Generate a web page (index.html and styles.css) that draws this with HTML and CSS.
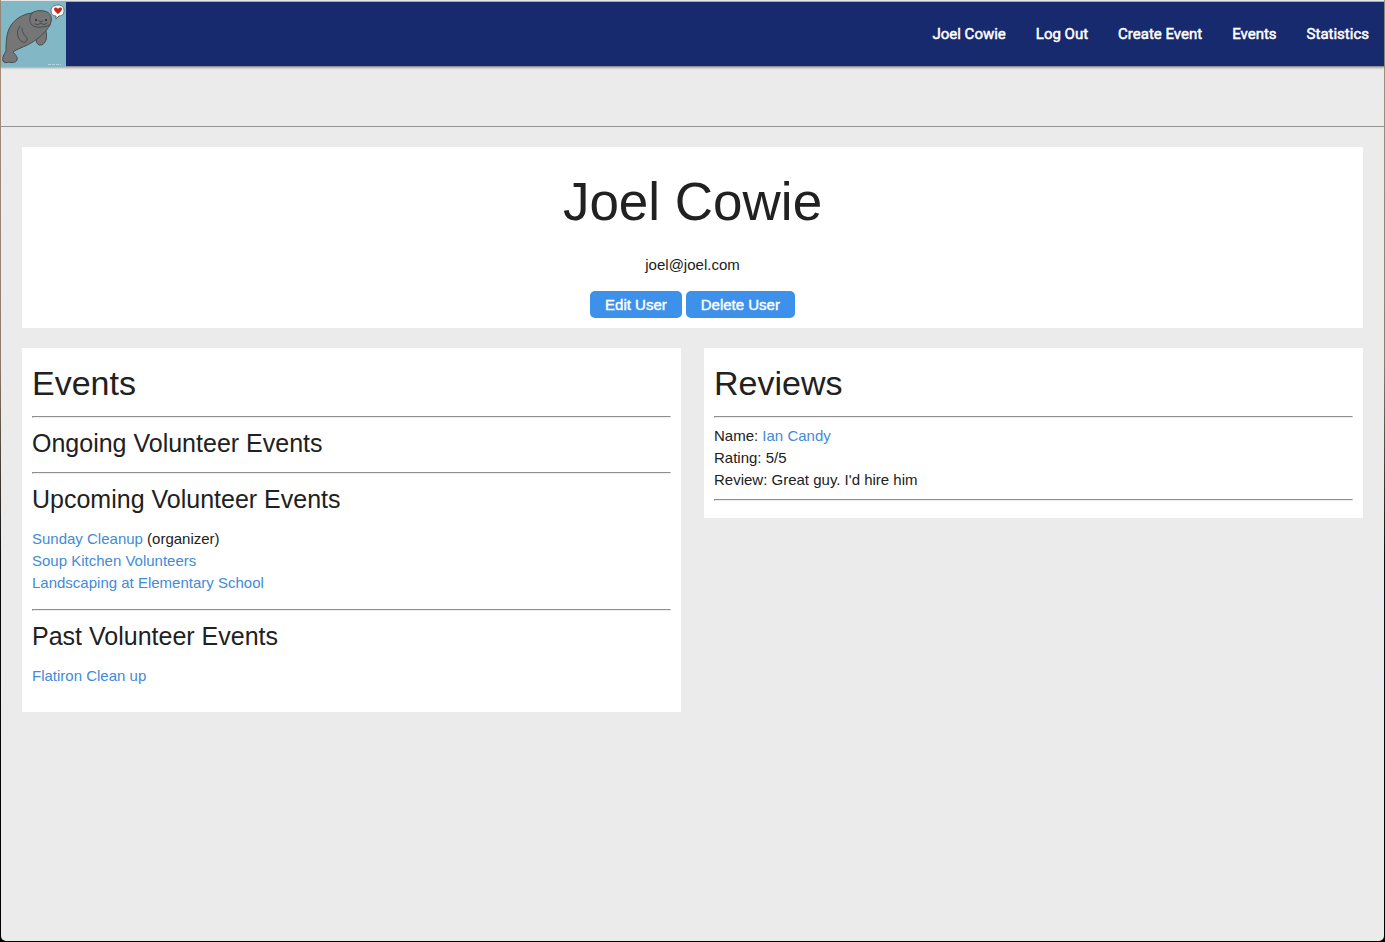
FILE: index.html
```html
<!DOCTYPE html>
<html lang="en">
<head>
<meta charset="utf-8">
<title>Joel Cowie</title>
<link rel="stylesheet" href="styles.css">
</head>
<body>
<div class="page">
  <header class="navbar">
    <a class="logo" href="#" aria-label="Home">
      <svg viewBox="0 0 65 65" width="65" height="65" aria-hidden="true">
        <rect width="65" height="65" fill="#82b8c6"/>
        <g fill="#767676" stroke="#454d4f" stroke-width="1" stroke-linejoin="round" stroke-linecap="round">
          <path d="M36 34C34 39 36 43 39 43C44 43 47 37 45 29Z"/>
          <path d="M31 11C21 12 12 18 8 27C5 34 5 42 5 49C3 52 1 56 2 59C3 61 6 61 8 60C10 61 15 61 16 58C17 55 14 52 12 50C16 47 23 45 30 41C37 37 45 30 49 23C52 16 50 10 43 9C38 8 33 9 31 11Z"/>
          <path fill="none" d="M31 11C28 15 28 20 31 23C34 26 41 26 49 23"/>
          <path d="M19 24C15 29 16 35 20 39C24 42 27 39 26 36C24 33 21 32 21 26"/>
          <path fill="none" d="M34 22Q37 24 40 21Q43 24 46 21M38 19Q40 21 42 19"/>
        </g>
        <circle cx="35" cy="18" r="1" fill="#242b2d"/><circle cx="45" cy="18" r="1" fill="#242b2d"/>
        <path d="M57 3C53 3 50 5 50 9C50 12 52 14 55 14L55 17L58 14C61 14 63 12 63 9C63 5 61 3 57 3Z" fill="#fff" stroke="#555" stroke-width=".8"/>
        <path d="M57 12C55 10 53 9 53 7C53 5 56 5 57 7C58 5 61 5 61 7C61 9 59 10 57 12Z" fill="#bd2925"/>
        <path d="M47 62.500H60" stroke="#b4d5de" stroke-width="1" stroke-dasharray="3 1"/>
      </svg>
    </a>
    <nav class="menu">
      <a href="#">Joel Cowie</a>
      <a href="#">Log Out</a>
      <a href="#">Create Event</a>
      <a href="#">Events</a>
      <a href="#">Statistics</a>
    </nav>
  </header>
  <div class="notice"></div>
  <main class="content">
    <section class="card profile">
      <h1>Joel Cowie</h1>
      <p>joel@joel.com</p>
      <div class="actions">
        <button type="button">Edit User</button>
        <button type="button">Delete User</button>
      </div>
    </section>
    <div class="columns">
      <section class="card">
        <h2>Events</h2>
        <hr>
        <h3>Ongoing Volunteer Events</h3>
        <hr>
        <h3>Upcoming Volunteer Events</h3>
        <ul>
          <li><a href="#">Sunday Cleanup</a> (organizer)</li>
          <li><a href="#">Soup Kitchen Volunteers</a></li>
          <li><a href="#">Landscaping at Elementary School</a></li>
        </ul>
        <hr>
        <h3>Past Volunteer Events</h3>
        <ul>
          <li><a href="#">Flatiron Clean up</a></li>
        </ul>
      </section>
      <section class="card">
        <h2>Reviews</h2>
        <hr>
        <div class="review">
          <p>Name: <a href="#">Ian Candy</a></p>
          <p>Rating: 5/5</p>
          <p>Review: Great guy. I'd hire him</p>
        </div>
        <hr class="last">
      </section>
    </div>
  </main>
</div>
</body>
</html>
```

FILE: styles.css
```css
* { box-sizing: border-box; }
body {
  margin: 0;
  padding: 0 1px 1px;
  background: linear-gradient(#a3937f 0, #8f7d6b 360px, #0b0b0d 560px, #000 100%);
  color: #212121;
  font: 15px/22px "Liberation Sans", Arial, sans-serif;
}
h1, h2, h3, p, ul { margin: 0; font-weight: 400; }
ul { padding: 0; list-style: none; margin-bottom: 15px; }
a { color: #428bd6; text-decoration: none; }
hr {
  margin: 0;
  border: 1px solid;
  border-color: #8e8e8e #eee #eee #8e8e8e;
}

.page {
  min-height: calc(100vh - 1px);
  border-top: 1px solid #ebebeb;
  border-radius: 0 0 5px 5px;
  background: #ebebeb;
}
.navbar {
  display: flex;
  justify-content: space-between;
  height: 66px;
  border-top: 1px solid #a8a8b0;
  border-bottom: 1px solid #929296;
  background: #182a6e;
  box-shadow: 0 1px 2px rgba(0, 0, 0, 0.3);
}
.logo { height: 65px; }
.logo svg { display: block; }
.menu {
  display: flex;
  align-items: center;
  gap: 30px;
  padding-right: 15px;
  font-family: Roboto, sans-serif;
}
.menu a { color: #fff; -webkit-text-stroke: 0.5px #fff; }
.notice { height: 60px; border-bottom: 1px solid #939393; }
.content { padding: 20px 21px; }
.card { padding: 10px; background: #fff; }
.profile { margin-bottom: 20px; text-align: center; }
h1 { margin: 15px 0 22px; font-size: 53px; line-height: 60px; }
h2 { margin: 6px 0 14px; font-size: 34px; line-height: 38px; }
h3 { margin: 11px 0 15px; font-size: 25px; line-height: 28px; }
.actions { display: flex; justify-content: center; gap: 4px; margin-top: 15px; }
.actions button {
  height: 27px;
  padding: 0 15px;
  border: 0;
  border-radius: 5px;
  background: #3d91ea;
  color: #fff;
  font: 15px/27px "Liberation Sans", Arial, sans-serif;
  -webkit-text-stroke: 0.4px #fff;
}
.columns {
  display: grid;
  grid-template-columns: 1fr 1fr;
  gap: 23px;
  align-items: start;
}
.review { margin: 7px 0 8px; }
.last { margin-bottom: 7px; }
```
